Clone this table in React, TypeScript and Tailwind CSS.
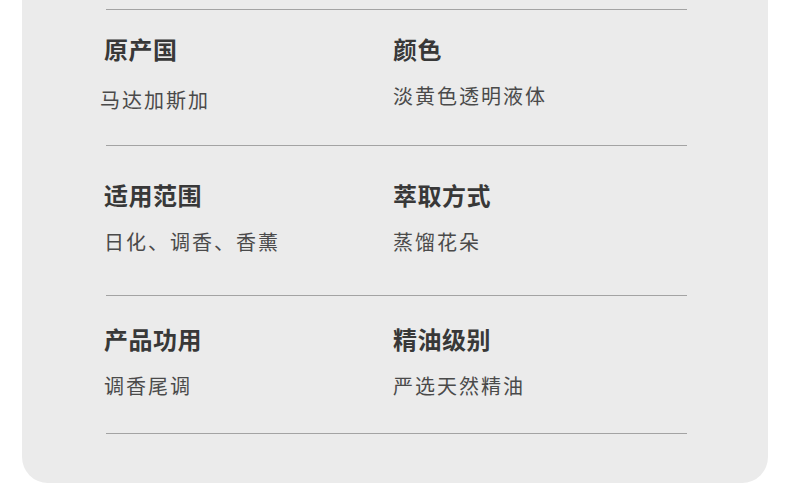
const rows = [
  {
    h: "h-[136px] pt-[23px]",
    items: [
      { title: "原产国", value: "马达加斯加", valueCls: "mt-[21px] -ml-[4px]" },
      { title: "颜色", value: "淡黄色透明液体", valueCls: "mt-[17px]" },
    ],
  },
  {
    h: "h-[150px] pt-[33px]",
    items: [
      { title: "适用范围", value: "日化、调香、香薰", valueCls: "mt-[17px]" },
      { title: "萃取方式", value: "蒸馏花朵", valueCls: "mt-[17px]" },
    ],
  },
  {
    h: "h-[138px] pt-[27px]",
    items: [
      { title: "产品功用", value: "调香尾调", valueCls: "mt-[17px]" },
      { title: "精油级别", value: "严选天然精油", valueCls: "mt-[17px]" },
    ],
  },
];

export default function App() {
  return (
    <div
      className="w-[790px] h-[498px] bg-white overflow-hidden"
      style={{ fontFamily: '"Noto Sans CJK SC", "Noto Sans", sans-serif' }}
    >
      <div className="ml-[22px] w-[746px] h-[483px] bg-[#ebebeb] rounded-b-[26px] pt-[9px] pl-[84px]">
        <div className="w-[581px] border-t border-[#a3a3a3]">
          {rows.map((row, i) => (
            <div
              key={i}
              className={`grid grid-cols-[289px_1fr] border-b border-[#a3a3a3] ${row.h}`}
            >
              {row.items.map((item, j) => (
                <div key={j} className="flex flex-col items-start -ml-[2px]">
                  <div className="text-[24px] leading-[32px] font-bold text-[#383838] tracking-[0.5px]">
                    {item.title}
                  </div>
                  <div
                    className={`text-[20px] leading-[28px] text-[#4a4a4a] tracking-[2px] ${item.valueCls}`}
                  >
                    {item.value}
                  </div>
                </div>
              ))}
            </div>
          ))}
        </div>
      </div>
    </div>
  );
}
